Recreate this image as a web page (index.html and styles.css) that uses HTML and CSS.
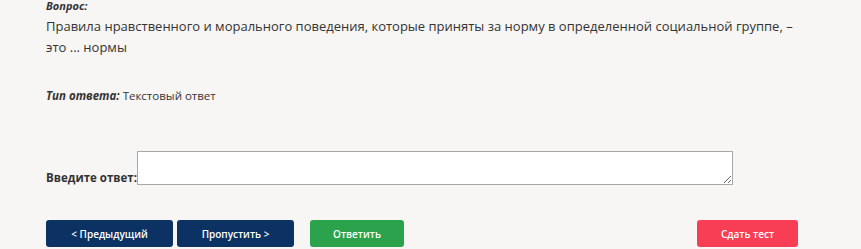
FILE: index.html
```html
<!DOCTYPE html>
<html lang="ru">
<head>
    <meta charset="UTF-8">
    <title>Тест</title>
    <link rel="stylesheet" href="styles.css">
</head>
<body>
    <div class="container">
        <div class="label-q">Вопрос:</div>
        <div class="question">Правила нравственного и морального поведения, которые приняты за норму в определенной социальной группе, – это ... нормы</div>

        <div class="answer-type"><em>Тип ответа:</em> Текстовый ответ</div>

        <div class="answer-row">
            <label class="answer-label" for="answer">Введите ответ:</label>
            <textarea id="answer" class="answer-input"></textarea>
        </div>

        <div class="buttons">
            <button class="btn btn-blue btn-prev">&lt; Предыдущий</button>
            <button class="btn btn-blue btn-skip">Пропустить &gt;</button>
            <button class="btn btn-green btn-answer">Ответить</button>
            <button class="btn btn-red btn-finish">Сдать тест</button>
        </div>
    </div>
</body>
</html>
```

FILE: styles.css
```css
body {
    margin: 0;
    padding: 0;
    background: #f7f6f5;
    color: #333;
    font-family: "Open Sans", Arial, sans-serif;
}

.container {
    width: 752px;
    margin: -2px 0 0 46px;
}

.label-q {
    font-size: 11px;
    line-height: 16px;
    font-weight: bold;
    font-style: italic;
}

.question {
    font-size: 13px;
    line-height: 21px;
    margin-top: 2px;
}

.answer-type {
    margin-top: 30px;
    font-size: 11.5px;
    line-height: 16px;
}

.answer-type em {
    font-weight: bold;
}

.answer-row {
    display: flex;
    align-items: flex-end;
    margin-top: 47px;
}

.answer-label {
    font-size: 11.5px;
    font-weight: bold;
    line-height: 14px;
    margin-right: 0;
}

.answer-input {
    width: 596px;
    height: 34px;
    box-sizing: border-box;
    margin: 0;
    border: 1px solid #a9a9a9;
    background: #fff;
    resize: both;
}

.buttons {
    display: flex;
    margin-top: 35px;
}

.btn {
    height: 27px;
    border: none;
    border-radius: 3px;
    color: #fff;
    font-family: "Open Sans", Arial, sans-serif;
    font-size: 10px;
    font-weight: 600;
    padding: 0;
}

.btn-blue {
    background: #0b3263;
}

.btn-green {
    background: #2ba24c;
}

.btn-red {
    background: #f73e55;
    margin-left: auto;
}

.btn-prev {
    width: 127px;
}

.btn-skip {
    width: 117px;
    margin-left: 4px;
}

.btn-answer {
    width: 94px;
    margin-left: 16px;
}

.btn-finish {
    width: 101px;
}
```
